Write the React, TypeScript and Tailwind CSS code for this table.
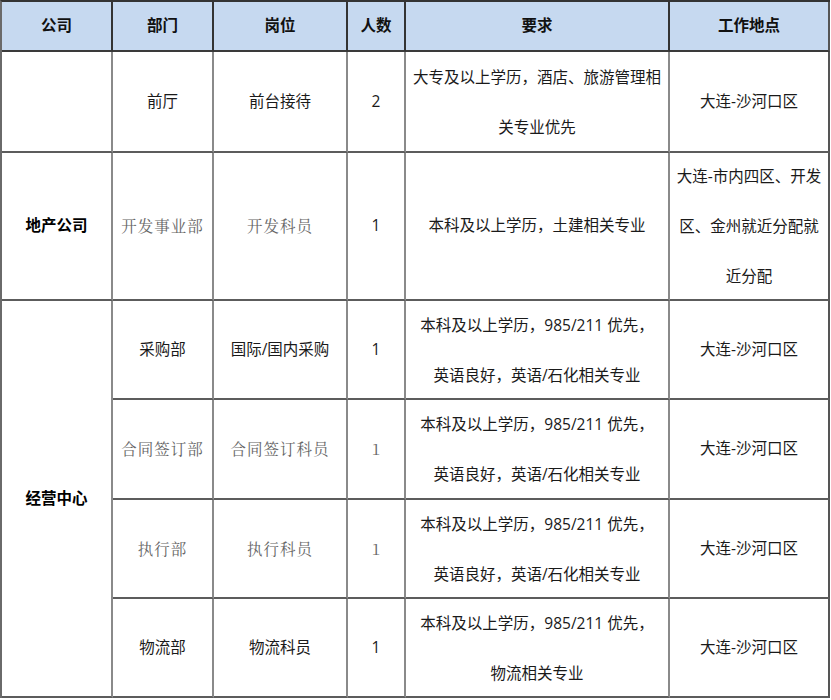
import React from "react"

type Cell = {
    text: React.ReactNode
    gray?: boolean
    serifNum?: boolean
    bold?: boolean
    span?: string
}

const SANS = "font-['Open_Sans','Noto_Sans_CJK_SC',sans-serif]"
const SERIF = "font-['Noto_Serif_CJK_SC','Liberation_Serif','Noto_Sans_CJK_SC',serif]"

function Lines({ lines }: { lines: string[] }) {
    return (
        <div className="leading-[50px]">
            {lines.map((l, i) => (
                <div key={i} className="whitespace-nowrap">{l}</div>
            ))}
        </div>
    )
}

function Td({ c, last }: { c: Cell; last?: boolean }) {
    return (
        <div
            className={`flex items-center justify-center text-center border-b-2 border-b-[#5c5c5c] ${last ? "" : "border-r-2 border-r-[#8a8a8a]"} ${c.span ?? ""} ${
                c.bold ? "font-bold text-black" : c.gray ? `${SERIF} text-[#666]` : "text-[#1a1a1a]"
            } ${c.serifNum ? "font-['Liberation_Serif',serif]" : ""}`}
        >
            {c.text}
        </div>
    )
}

const HEAD = ["公司", "部门", "岗位", "人数", "要求", "工作地点"]

const REQ_EN = ["本科及以上学历，985/211 优先，", "英语良好，英语/石化相关专业"]

export default function App() {
    return (
        <div className={`w-[831px] h-[700px] bg-white ${SANS} text-[15.5px]`}>
            <div className="grid grid-cols-[111px_101px_134px_58px_264px_160px] grid-rows-[50px_101px_148px_99px_100px_99px_99px] border-l-2 border-t-2 border-l-[#6a6a6a] border-t-[#333] w-[830px] overflow-hidden">
                {HEAD.map((h, i) => (
                    <div
                        key={h}
                        className={`flex items-center justify-center bg-[#c6d9f0] font-bold text-[#111] border-b-2 border-b-[#3a3a3a] ${
                            i === 5 ? "border-r-2 border-r-[#555]" : "border-r-2 border-r-[#333]"
                        }`}
                    >
                        {h}
                    </div>
                ))}

                {/* 前厅 */}
                <Td c={{ text: "" }} />
                <Td c={{ text: "前厅" }} />
                <Td c={{ text: "前台接待" }} />
                <Td c={{ text: "2" }} />
                <Td c={{ text: <Lines lines={["大专及以上学历，酒店、旅游管理相", "关专业优先"]} /> }} />
                <Td c={{ text: "大连-沙河口区", span: "border-r-2 border-r-[#555]" }} />

                {/* 地产公司 */}
                <Td c={{ text: "地产公司", bold: true }} />
                <Td c={{ text: <span className="tracking-[1px]">开发事业部</span>, gray: true }} />
                <Td c={{ text: <span className="tracking-[1px]">开发科员</span>, gray: true }} />
                <Td c={{ text: "1" }} />
                <Td c={{ text: "本科及以上学历，土建相关专业" }} />
                <Td
                    c={{
                        text: <Lines lines={["大连-市内四区、开发", "区、金州就近分配就", "近分配"]} />,
                        span: "border-r-2 border-r-[#555]",
                    }}
                />

                {/* 经营中心 */}
                <Td c={{ text: "经营中心", bold: true, span: "row-span-4" }} />
                <Td c={{ text: "采购部" }} />
                <Td c={{ text: "国际/国内采购" }} />
                <Td c={{ text: "1" }} />
                <Td c={{ text: <Lines lines={REQ_EN} /> }} />
                <Td c={{ text: "大连-沙河口区", span: "border-r-2 border-r-[#555]" }} />

                <Td c={{ text: <span className="tracking-[1px]">合同签订部</span>, gray: true }} />
                <Td c={{ text: <span className="tracking-[1px]">合同签订科员</span>, gray: true }} />
                <Td c={{ text: "1", gray: true, serifNum: true }} />
                <Td c={{ text: <Lines lines={REQ_EN} /> }} />
                <Td c={{ text: "大连-沙河口区", span: "border-r-2 border-r-[#555]" }} />

                <Td c={{ text: <span className="tracking-[1px]">执行部</span>, gray: true }} />
                <Td c={{ text: <span className="tracking-[1px]">执行科员</span>, gray: true }} />
                <Td c={{ text: "1", gray: true, serifNum: true }} />
                <Td c={{ text: <Lines lines={REQ_EN} /> }} />
                <Td c={{ text: "大连-沙河口区", span: "border-r-2 border-r-[#555]" }} />

                <Td c={{ text: "物流部" }} />
                <Td c={{ text: "物流科员" }} />
                <Td c={{ text: "1" }} />
                <Td c={{ text: <Lines lines={["本科及以上学历，985/211 优先，", "物流相关专业"]} /> }} />
                <Td c={{ text: "大连-沙河口区", span: "border-r-2 border-r-[#555]" }} />
            </div>
        </div>
    )
}
